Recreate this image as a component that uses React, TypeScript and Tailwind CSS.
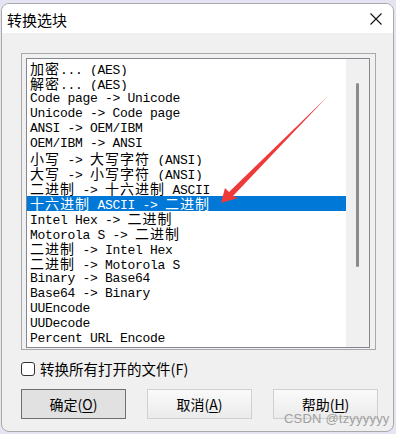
import React from 'react';

const items = [
  '加密... (AES)',
  '解密... (AES)',
  'Code page -> Unicode',
  'Unicode -> Code page',
  'ANSI -> OEM/IBM',
  'OEM/IBM -> ANSI',
  '小写 -> 大写字符 (ANSI)',
  '大写 -> 小写字符 (ANSI)',
  '二进制 -> 十六进制 ASCII',
  '十六进制 ASCII -> 二进制',
  'Intel Hex -> 二进制',
  'Motorola S -> 二进制',
  '二进制 -> Intel Hex',
  '二进制 -> Motorola S',
  'Binary -> Base64',
  'Base64 -> Binary',
  'UUEncode',
  'UUDecode',
  'Percent URL Encode',
];

const SELECTED = 9;

// split a label into runs so the CJK chars get double-width cells like the old fixed font
function Label({ text }: { text: string }) {
  const runs = text.match(/[\u4e00-\u9fff]+|[^\u4e00-\u9fff]+/g) || [];
  return (
    <>
      {runs.map((r, i) =>
        /[\u4e00-\u9fff]/.test(r) ? (
          <span key={i} className="text-[14px] tracking-[1px] font-['Noto_Sans_CJK_SC',sans-serif]">
            {r}
          </span>
        ) : (
          <span key={i}>{r}</span>
        )
      )}
    </>
  );
}

function Btn({ label, hot, primary }: { label: string; hot: string; primary?: boolean }) {
  return (
    <button
      className={
        primary
          ? 'w-[105px] h-[30px] border border-[#6f6f6f] bg-[#e1e1e1] text-[14px] text-black flex items-center justify-center'
          : 'w-[105px] h-[30px] border border-[#d0d0d0] bg-gradient-to-b from-[#fafafa] to-[#ebebeb] text-[14px] text-black flex items-center justify-center'
      }
    >
      {label}(<span className="underline underline-offset-2">{hot}</span>)
    </button>
  );
}

export default function App() {
  return (
    <div className="w-[396px] h-[434px] overflow-hidden bg-[#e4e4f2] flex flex-col font-['Noto_Sans_CJK_SC',sans-serif]">
      {/* editor text peeking behind the dialog */}
      <div className="h-[3px] overflow-hidden shrink-0">
        <div className="-mt-[9px] pl-[14px] whitespace-pre font-['Liberation_Mono',monospace] text-[13px] leading-[12px] text-[#2020c0]">
          {'00 10 F0 F0 12   4801F1EDBF1B1E8BE0DB4'}
        </div>
      </div>

      <div className="ml-[1px] mr-[2px] h-[429px] rounded-[8px] border border-[#a9a9a9] overflow-hidden flex flex-col bg-[#f0f0f0]">
        {/* title bar */}
        <div className="h-[29px] bg-white flex items-center justify-between pl-[5px] pr-[11px] shrink-0">
          <span className="text-[15px] text-black leading-none mt-[1px]">转换选块</span>
          <svg width="12" height="12" viewBox="0 0 12 12" className="mt-[1px]">
            <path d="M0.5 0.5 L11.5 11.5 M11.5 0.5 L0.5 11.5" stroke="#111" strokeWidth="1.1" fill="none" />
          </svg>
        </div>

        {/* body */}
        <div className="relative flex-1 flex flex-col pl-[19px]">
          {/* list frame */}
          <div className="mt-[20px] w-[355px] h-[297px] border border-[#a8a8a8] pl-[4px] pt-[4px] pb-[1px]">
            <div className="w-[344px] h-[290px] border border-[#828790] flex">
              <div className="w-[319px] bg-white pt-[2px] font-['Liberation_Mono',monospace] text-[13px] tracking-[-0.3px] text-black">
                {items.map((it, i) => (
                  <div
                    key={i}
                    className={
                      i === SELECTED
                        ? 'h-[15px] leading-[15px] pl-[3px] whitespace-pre overflow-hidden bg-[#0078d7] text-white'
                        : 'h-[15px] leading-[15px] pl-[3px] whitespace-pre overflow-hidden'
                    }
                  >
                    <Label text={it} />
                  </div>
                ))}
              </div>
              <div className="flex-1 bg-[#f0f0f0] flex justify-center pt-[24px]">
                <div className="w-[3px] h-[184px] rounded-full bg-[#8b8b8b]" />
              </div>
            </div>
          </div>

          {/* checkbox */}
          <label className="mt-[9px] h-[20px] flex items-center gap-[5px]">
            <span className="w-[14px] h-[14px] rounded-[3px] border border-[#333] bg-white" />
            <span className="text-[14.5px] text-black">转换所有打开的文件(F)</span>
          </label>

          {/* buttons */}
          <div className="mt-[10px] flex gap-[21px]">
            <Btn label="确定" hot="O" primary />
            <Btn label="取消" hot="A" />
            <Btn label="帮助" hot="H" />
          </div>

          {/* watermark */}
          <div className="absolute left-[282px] top-[379px] text-[13px] leading-none text-[#a0a0a0] font-['Liberation_Sans',sans-serif] tracking-[0.2px]">
            CSDN @tzyyyyyy
          </div>
        </div>
      </div>

      {/* red annotation arrow */}
      <svg className="absolute left-0 top-0 pointer-events-none" width="396" height="434">
        <polygon points="221,203 225,188 229,192 327,97 233,196 238,198" fill="#f03a3a" />
      </svg>
    </div>
  );
}
